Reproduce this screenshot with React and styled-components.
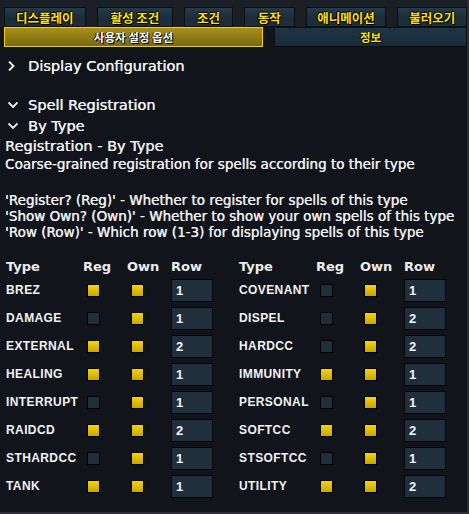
import React from "react"
import styled, { createGlobalStyle } from "styled-components"

const GlobalStyle = createGlobalStyle`
  html, body {
    margin: 0;
    padding: 0;
    background: #11141b;
  }
  body {
    font-family: "DejaVu Sans", sans-serif;
    color: #ececec;
  }
`

const Frame = styled.div`
  width: 469px;
  height: 514px;
  box-sizing: border-box;
  background: #11141b;
  border-right: 2px solid #2a2f37;
  border-bottom: 2px solid #2a2f37;
  overflow: hidden;
`

const TopStrip = styled.div`
  height: 7px;
  background: #1a1f26;
`

const TabRow = styled.div`
  display: flex;
  padding: 0 0 0 4px;
  gap: 11px;
  height: 20px;
  background: #1a1f26;
`

const Tab = styled.div`
  width: ${p => p.w}px;
  box-sizing: border-box;
  display: flex;
  align-items: center;
  justify-content: center;
  border: 1px solid #0b0f13;
  background: linear-gradient(#243b4c, #1c2c38 60%, #1e2e3a);
  color: #ffe20a;
  font-family: "Noto Sans CJK KR", sans-serif;
  font-weight: 700;
  font-size: 12.5px;
  text-shadow: 1px 1px 0 #000, -1px 0 0 #000, 0 -1px 0 #000;
`

const SubRow = styled.div`
  display: flex;
  gap: 11px;
  padding-left: 4px;
  height: 20px;
  margin-bottom: 6px;
`

const SubTab = styled.div`
  box-sizing: border-box;
  flex: ${p => (p.active ? "0 0 259px" : "1")};
  display: flex;
  align-items: center;
  justify-content: center;
  font-family: "Noto Sans CJK KR", sans-serif;
  font-weight: 700;
  font-size: 11.5px;
  border: 1px solid ${p => (p.active ? "#f4d20c" : "#0b0f13")};
  background: ${p =>
    p.active
      ? "linear-gradient(#a7901a, #8f7a12 55%, #7b690f)"
      : "linear-gradient(#1f3544, #1a2b37)"};
  color: ${p => (p.active ? "#ffffff" : "#ffe20a")};
  text-shadow: 1px 1px 0 #000, -1px 0 0 #000;
`

const Content = styled.div`
  padding: 0 5px 0 6px;
  text-shadow: 0.35px 0 0 currentColor;
`

const Header = styled.div`
  display: flex;
  align-items: center;
  gap: 10px;
  font-size: 14.5px;
  height: 21px;
  margin-top: ${p => p.mt || 0}px;
  color: #f0f0f0;
  padding-left: 2px;
`

const Title = styled.div`
  font-size: 14.5px;
  margin-top: 1px;
  line-height: 19px;
  margin-left: -1px;
`

const Text = styled.div`
  font-size: 13.5px;
  line-height: 16px;
  white-space: pre;
  margin-left: -1px;
`

const Gap = styled.div`
  height: 20px;
`

const Tables = styled.div`
  display: grid;
  grid-template-columns: 233px 228px;
  margin-top: 16px;
`

const Table = styled.div`
  display: grid;
  grid-template-columns: 77px 44px 44px 1fr;
  grid-template-rows: 20px;
  grid-auto-rows: 28px;
  align-items: center;
`

const HeadCell = styled.div`
  font-size: 13px;
  font-weight: 700;
  text-shadow: none;
`

const TypeCell = styled.div`
  font-family: "Liberation Sans", sans-serif;
  font-weight: 700;
  font-size: 12px;
  letter-spacing: 0.4px;
  color: #f2f2f2;
  white-space: nowrap;
  text-shadow: none;
`

const Check = styled.div`
  width: 13px;
  height: 13px;
  margin-left: 4px;
  border: 1px solid #000;
  box-sizing: border-box;
  background: ${p =>
    p.on ? "linear-gradient(#f2d30e, #c9a600)" : "#1e2e3b"};
`

const RowInput = styled.div`
  width: 42px;
  height: 23px;
  box-sizing: border-box;
  border: 1px solid #05070a;
  background: #1f2f3c;
  font-family: "Liberation Sans", sans-serif;
  font-weight: 700;
  font-size: 13px;
  display: flex;
  align-items: center;
  padding-left: 4px;
  color: #f4f4f4;
  text-shadow: none;
`

const Chevron = ({ open }) => (
  <svg width="10" height="10" viewBox="0 0 10 10">
    <path
      d={open ? "M0.5 2.5 L5 7 L9.5 2.5" : "M1 0.5 L5.5 5 L1 9.5"}
      stroke="#f0f0f0"
      strokeWidth="1.8"
      fill="none"
    />
  </svg>
)

const tabs = [
  ["디스플레이", 82],
  ["활성 조건", 77],
  ["조건", 49],
  ["동작", 51],
  ["애니메이션", 81],
  ["불러오기", 70],
]

const left = [
  ["BREZ", 1, 1, 1],
  ["DAMAGE", 0, 1, 1],
  ["EXTERNAL", 1, 1, 2],
  ["HEALING", 1, 1, 1],
  ["INTERRUPT", 0, 1, 1],
  ["RAIDCD", 1, 1, 2],
  ["STHARDCC", 0, 1, 1],
  ["TANK", 1, 1, 1],
]

const right = [
  ["COVENANT", 0, 1, 1],
  ["DISPEL", 0, 1, 2],
  ["HARDCC", 0, 1, 2],
  ["IMMUNITY", 1, 1, 1],
  ["PERSONAL", 0, 1, 1],
  ["SOFTCC", 1, 1, 2],
  ["STSOFTCC", 0, 1, 1],
  ["UTILITY", 1, 1, 2],
]

function TypeTable({ rows }) {
  return (
    <Table>
      <HeadCell>Type</HeadCell>
      <HeadCell>Reg</HeadCell>
      <HeadCell>Own</HeadCell>
      <HeadCell>Row</HeadCell>
      {rows.map(([name, reg, own, row]) => (
        <React.Fragment key={name}>
          <TypeCell>{name}</TypeCell>
          <Check on={reg} />
          <Check on={own} />
          <RowInput>{row}</RowInput>
        </React.Fragment>
      ))}
    </Table>
  )
}

export default function App() {
  return (
    <Frame>
      <GlobalStyle />
      <TopStrip />
      <TabRow>
        {tabs.map(([t, w]) => (
          <Tab key={t} w={w}>{t}</Tab>
        ))}
      </TabRow>
      <SubRow>
        <SubTab active>사용자 설정 옵션</SubTab>
        <SubTab>정보</SubTab>
      </SubRow>
      <Content>
        <Header mt={8}>
          <Chevron /> Display Configuration
        </Header>
        <Header mt={18}>
          <Chevron open /> Spell Registration
        </Header>
        <Header>
          <Chevron open /> By Type
        </Header>
        <Title>Registration - By Type</Title>
        <Text>Coarse-grained registration for spells according to their type</Text>
        <Gap />
        <Text>'Register? (Reg)' - Whether to register for spells of this type</Text>
        <Text>'Show Own? (Own)' - Whether to show your own spells of this type</Text>
        <Text>'Row (Row)' - Which row (1-3) for displaying spells of this type</Text>
        <Tables>
          <TypeTable rows={left} />
          <TypeTable rows={right} />
        </Tables>
      </Content>
    </Frame>
  )
}
